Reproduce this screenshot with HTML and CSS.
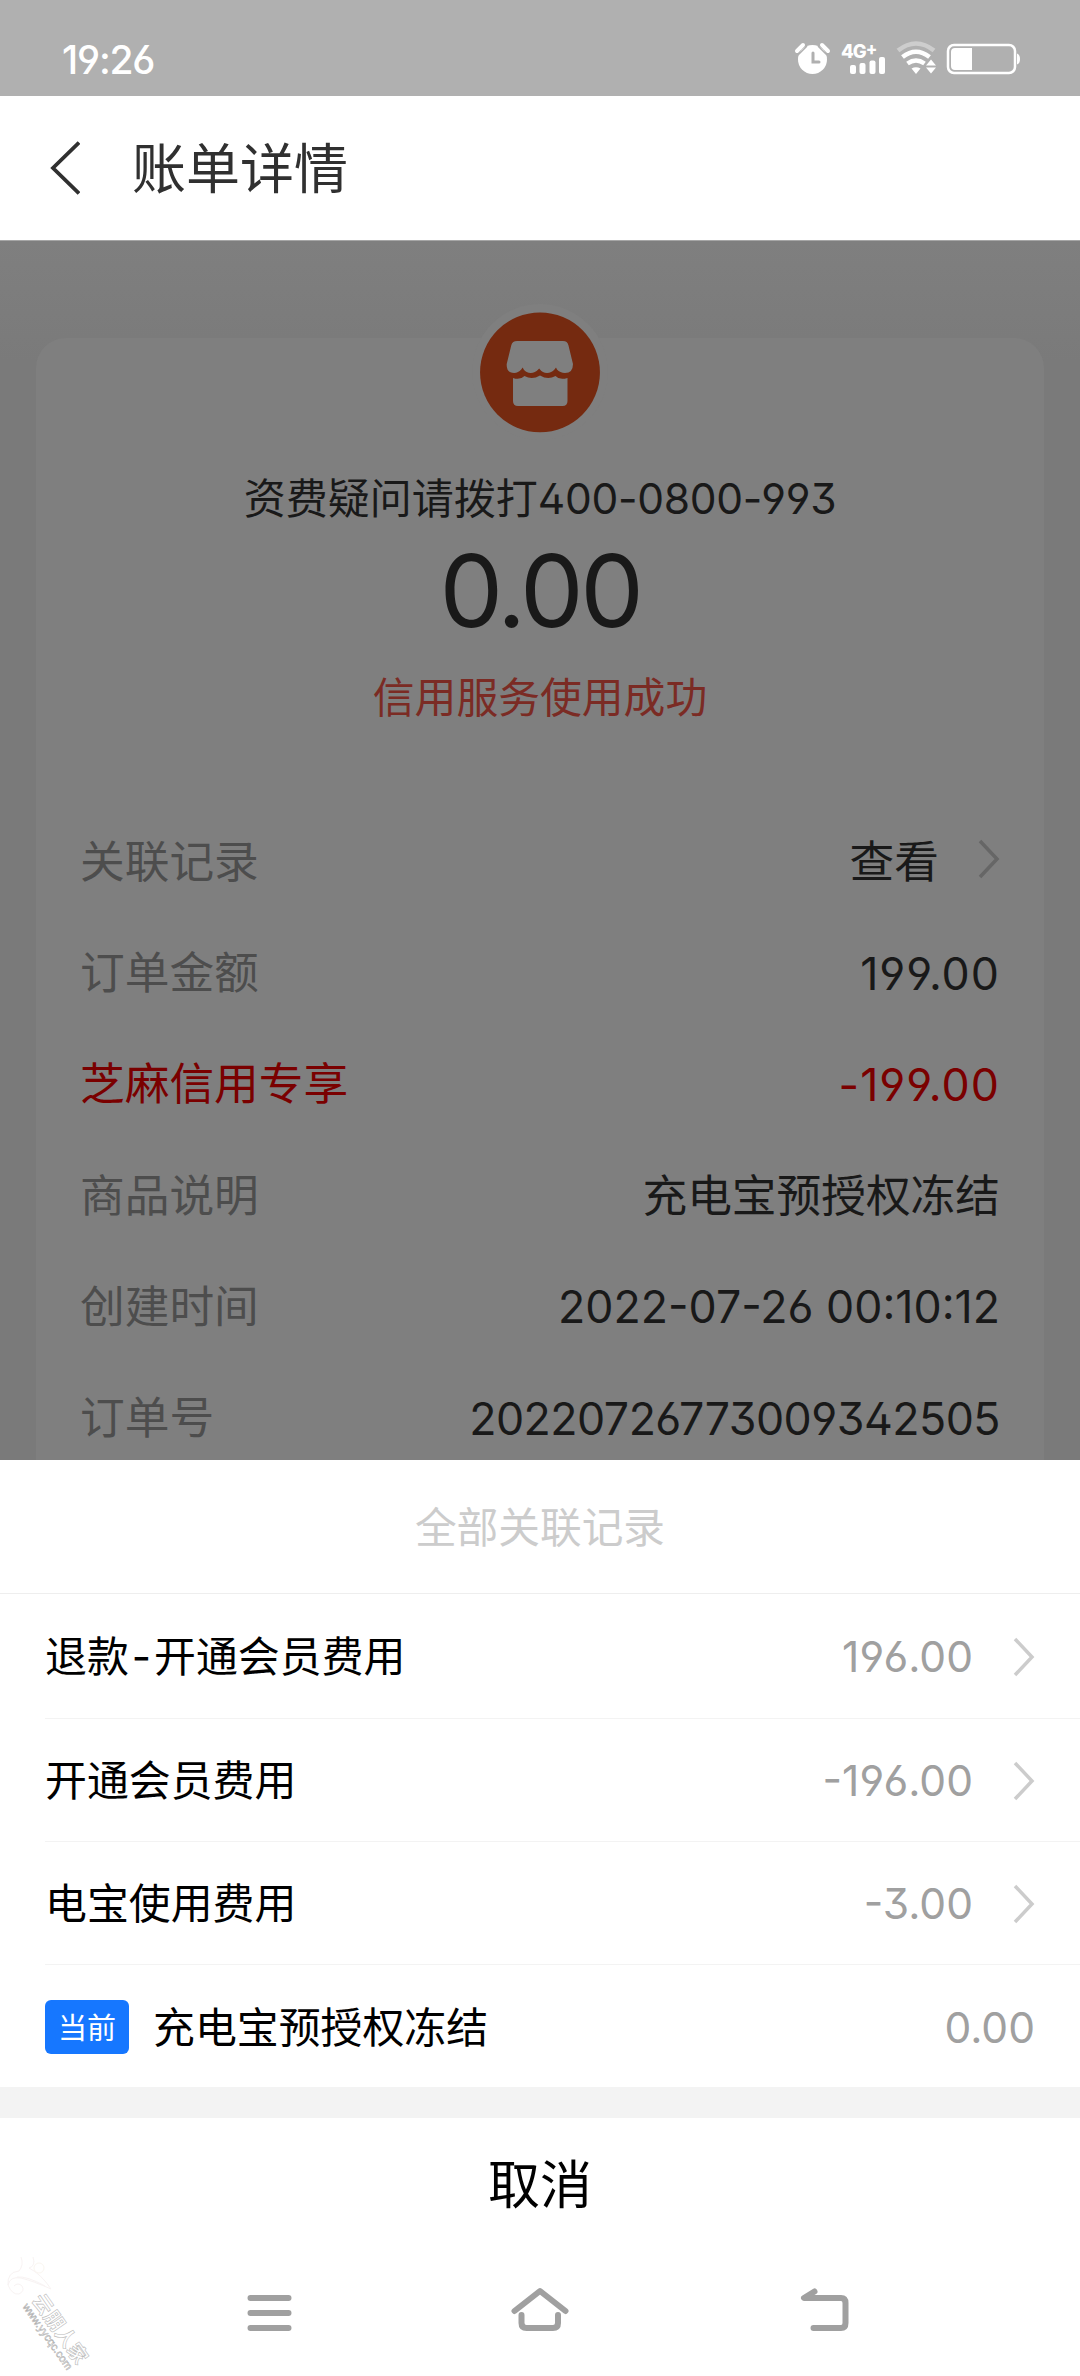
FILE: index.html
```html
<!DOCTYPE html>
<html lang="zh-CN">
<head>
<meta charset="utf-8">
<title>账单详情</title>
<link rel="stylesheet" href="styles.css">
</head>
<body>
<div class="screen">
  <div class="statusbar">
    <span class="clock">19:26</span>
    <svg class="status-icons" width="240" height="48" viewBox="0 0 240 48">
      <g fill="#fff">
        <circle cx="22.500" cy="23.500" r="14.500"/>
        <path d="M7 15l6-6M38 15l-6-6" stroke="#fff" stroke-width="4" stroke-linecap="round"/>
        <path d="M8 19l9-9M37 19l-9-9" stroke="#b0b0b0" stroke-width="1.500"/>
        <path d="M23 17v9h6" fill="none" stroke="#b0b0b0" stroke-width="3" stroke-linecap="round"/>
        <text x="51" y="21.500" class="net">4G<tspan dy="-3" class="plus">+</tspan></text>
        <rect x="60" y="29" width="6" height="9" rx="2"/>
        <rect x="69.500" y="27" width="6" height="11" rx="2"/>
        <rect x="79.500" y="24.500" width="6" height="13.500" rx="2"/>
        <rect x="89" y="21" width="6" height="17" rx="2"/>
        <path d="M121.500 32.500q4.500-2.500 9 0l-4.500 5.500z"/>
        <path d="M136 29.500l5-6 5 6zM136 31.500h10l-5 6z"/>
      </g>
      <g fill="none" stroke="#fff" stroke-width="4.500">
        <path d="M108 14.500q18-14 36 0" stroke="#cdcdcd"/>
        <path d="M112.500 21q13.500-10.500 27 0"/>
        <path d="M117.500 27.500q8.500-6 17 0"/>
      </g>
      <rect x="158" y="9" width="67" height="28" rx="6" fill="none" stroke="#fff" stroke-width="2.500"/>
      <path d="M161 16q0-4 4-4h17v22h-17q-4 0-4-4zM227 17.500q3 1 3 5.500t-3 5.500z" fill="#fff"/>
    </svg>
  </div>
  <header class="navbar">
    <svg class="back" width="32" height="54" viewBox="0 0 32 54"><path d="M31 1.500L5 27l26 25.500" fill="none" stroke="#303030" stroke-width="3.800"/></svg>
    <h1 class="title">账单详情</h1>
  </header>
  <main class="page">
    <section class="card">
      <div class="shop">
        <svg width="136" height="136" viewBox="0 0 160 160">
          <circle cx="80" cy="80" r="80" class="halo"/>
          <circle cx="80" cy="80.500" r="70.500" fill="#752a10"/>
          <g fill="#7f7f7f" transform="translate(80 80.500) scale(1.176) translate(-80 -82)">
            <path d="M57 50.500h46q4.500 0 5.500 4.500l4.500 18.500q0 9-8 9-5 0-8-3.500l-1-2-1.500 2q-3 3.500-7.500 3.500t-7-3.500l-.800-1-1 1q-3 3.500-7.500 3.500t-7-3.500l-1-2-1.500 2q-3 3.500-7 3.500-8 0-7.500-9l4.500-18.500q1-4.500 6-4.500z"/>
            <path d="M53 87.500q7 2.500 11.500-2 7.500 4.500 15.500-.500 8 5 15.500.500 4 4.500 12 2v23q0 5-5 5h-44.500q-5 0-5-5z"/>
          </g>
        </svg>
      </div>
      <div class="payee">资费疑问请拨打<span class="num phone">400-0800-993</span></div>
      <div class="total num">0.00</div>
      <div class="state">信用服务使用成功</div>
      <dl class="rows">
        <div class="row"><dt>关联记录</dt><dd>查看<svg class="chev" width="24" height="42" viewBox="0 0 24 42"><path d="M4 3l17 18L4 39" fill="none" stroke="#666" stroke-width="3.500"/></svg></dd></div>
        <div class="row"><dt>订单金额</dt><dd class="num">199.00</dd></div>
        <div class="row promo"><dt>芝麻信用专享</dt><dd class="num">-199.00</dd></div>
        <div class="row"><dt>商品说明</dt><dd>充电宝预授权冻结</dd></div>
        <div class="row"><dt>创建时间</dt><dd class="num date">2022-07-26 00:10:12</dd></div>
        <div class="row"><dt>订单号</dt><dd class="num order">20220726773009342505</dd></div>
      </dl>
    </section>
  </main>
  <section class="sheet">
    <h2 class="sheet-title">全部关联记录</h2>
    <ul class="records">
      <li class="record"><span class="name">退款<span class="num dash">-</span>开通会员费用</span><span class="amount num">196.00</span><svg class="chev" width="24" height="42" viewBox="0 0 24 42"><path d="M4 3l17 18L4 39" fill="none" stroke="#ccc" stroke-width="3.500"/></svg></li>
      <li class="record"><span class="name">开通会员费用</span><span class="amount num">-196.00</span><svg class="chev" width="24" height="42" viewBox="0 0 24 42"><path d="M4 3l17 18L4 39" fill="none" stroke="#ccc" stroke-width="3.500"/></svg></li>
      <li class="record"><span class="name">电宝使用费用</span><span class="amount num">-3.00</span><svg class="chev" width="24" height="42" viewBox="0 0 24 42"><path d="M4 3l17 18L4 39" fill="none" stroke="#ccc" stroke-width="3.500"/></svg></li>
      <li class="record"><span class="badge">当前</span><span class="name">充电宝预授权冻结</span><span class="amount num">0.00</span></li>
    </ul>
    <button class="cancel">取消</button>
  </section>
  <footer class="sysnav">
    <svg width="60" height="48" viewBox="0 0 60 48"><path d="M10.500 9h38M10.500 24h38M10.500 39h38"/></svg>
    <svg width="60" height="48" viewBox="0 0 60 48"><path d="M4.500 22L30 2l25.500 20M11.500 26v8q0 5 5 5h26.500q5 0 5-5v-8"/></svg>
    <svg width="60" height="48" viewBox="0 0 60 48"><path d="M34.500 2.500L24 9h37q4.500 0 4.500 5v20q0 5-4.500 5H33.500"/></svg>
  </footer>
  <div class="watermark"><b>云朋人家</b><i>www.yycqc.com</i></div>
  <svg class="watermark-logo" width="50" height="44" viewBox="0 0 50 44"><path d="M16 2q3 8-2 14Q2 17 3 30q4 10 11 9 6-3 3-8-4-4-8 0M3 30q2-9 13-7 12 3 30 11-10-15-22-21 7-2 4-11M12 22q10-1 28 9" fill="none" stroke="#f8f3f3"/><circle cx="34" cy="13" r="5" fill="none" stroke="#faf6f0"/></svg>
</div>
</body>
</html>
```
FILE: styles.css
```css
* { box-sizing: border-box; margin: 0; padding: 0; }
body { background: #fff; font-family: "Noto Sans CJK SC", sans-serif; }
.screen { position: relative; width: 1080px; height: 2376px; overflow: hidden; display: flex; flex-direction: column; background: #fff; color: #191919; }
.num { font-family: Inter, "Noto Sans CJK SC", sans-serif; font-weight: 400; font-feature-settings: "cv03", "cv04", "ss01"; }

.statusbar { height: 96px; flex: none; background: #b0b0b0; display: flex; justify-content: space-between; align-items: flex-start; padding: 36px 65px 0 62px; color: #fff; }
.clock { font: 500 39px/48px Inter, sans-serif; letter-spacing: -1.2px; font-feature-settings: "cv03", "cv04", "ss01"; }
.status-icons { margin-right: -15px; }
.net { font: 800 18.500px Inter, sans-serif; letter-spacing: -1px; }
.plus { font-size: 17px; }

.navbar { height: 144px; flex: none; display: flex; align-items: center; padding: 0 48px; gap: 52px; color: #303030; }
.title { font-size: 54px; font-weight: 400; line-height: 80px; padding-bottom: 5px; }

.page { height: 1220px; flex: none; overflow: hidden; border-top: 1px solid #a6a6a6; background: #7a7a7a linear-gradient(#7f7f7f, #7a7a7a 120px); padding: 97px 36px 0; }
.card { height: 1180px; border-radius: 30px 30px 0 0; background: #7f7f7f; display: flex; flex-direction: column; align-items: center; }
.shop { height: 130px; margin-top: -34px; flex: none; }
.shop svg { display: block; }
.halo { fill: #7f7f7f; }
.payee { font-size: 42px; line-height: 62px; margin-top: 31px; white-space: nowrap; }
.phone { font-size: 42.500px; letter-spacing: -0.3px; }
.total { font-size: 101px; line-height: 120px; letter-spacing: -3.500px; }
.state { font-size: 41.800px; line-height: 62px; color: #7b2b24; margin-top: 14px; }
.rows { width: 100%; padding: 0 44px; margin-top: 81px; }
.row { height: 111.200px; display: flex; align-items: center; justify-content: space-between; font-size: 44.700px; white-space: nowrap; }
.row dt { color: #4d4d4d; padding-bottom: 8px; }
.row dd { display: flex; align-items: center; gap: 37px; padding-bottom: 8px; }
.row dd.num { padding-bottom: 0; letter-spacing: 1px; }
.row dd.order { letter-spacing: -0.520px; }
.row dd.date { letter-spacing: 0; }
.row.promo dt, .row.promo dd { color: #7a0000; }

.sheet { height: 785px; flex: none; background: #fff; display: flex; flex-direction: column; }
.sheet-title { height: 134px; font-size: 41.700px; font-weight: 400; line-height: 131px; text-align: center; color: #ccc; border-bottom: 1px solid #eee; }
.records { list-style: none; border-bottom: 31px solid #f3f3f3; padding-left: 45px; color: #000; }
.record { height: 123.200px; display: flex; align-items: center; font-size: 41.900px; padding: 2px 45px 0 0; border-bottom: 1px solid #f3f3f3; white-space: nowrap; }
.record:first-child { height: 124.500px; padding-top: 2px; }
.record:last-child { height: 122.500px; border-bottom: 0; }
.record .name { padding-bottom: 6px; }
.dash { margin: 0 3px; }
.amount { margin-left: auto; font-size: 42.500px; color: #a0a0a0; }
.record .chev { margin-left: 38px; }
.badge { width: 84px; height: 54px; border-radius: 6px; background: #1677ff; color: #fff; font-size: 29px; line-height: 52px; text-align: center; margin-right: 24px; }
.cancel { flex: 1; border: 0; background: none; font: 400 52px/76px "Noto Sans CJK SC", sans-serif; color: #000; }

.sysnav { flex: 1; display: flex; justify-content: space-between; padding: 44px 240px 0 240px; }
.sysnav svg { overflow: visible; fill: none; stroke: #a0a0a0; stroke-width: 6; stroke-linecap: round; stroke-linejoin: round; }

.watermark { position: absolute; left: 46px; top: 2290px; transform-origin: 0 0; transform: rotate(55deg); display: flex; flex-direction: column; line-height: 1; }
.watermark b { font-size: 20px; line-height: 20px; color: #fff; -webkit-text-stroke: 0.6px #bbb; }
.watermark i { font: 11px/11px "Liberation Sans", sans-serif; color: #fff; -webkit-text-stroke: 0.5px #aaa; }
.watermark-logo { position: absolute; left: 5px; top: 2255px; }
```
